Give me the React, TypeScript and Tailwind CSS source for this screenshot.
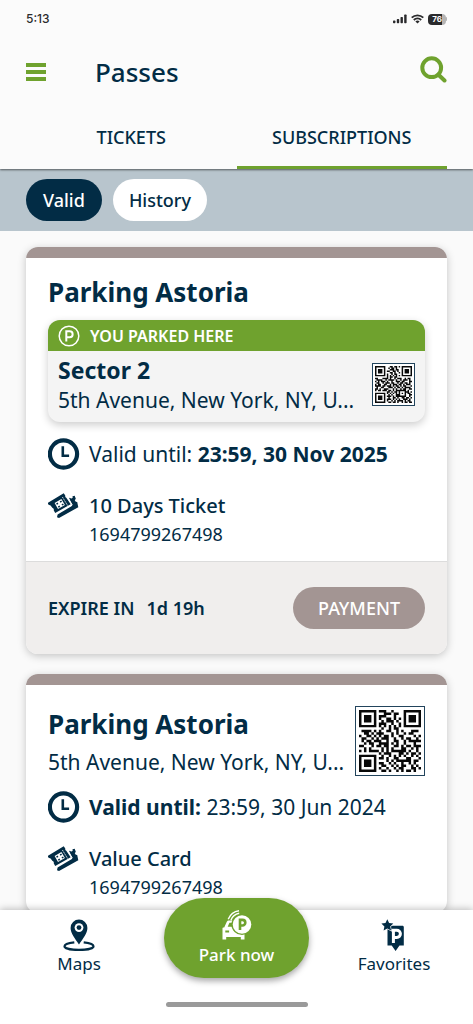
import React from "react";

const CARD_CODE = [
  "1111111011100100001111111",
  "1000001000111011001000001",
  "1011101011100010001011101",
  "1011101010011010101011101",
  "1011101001011101001011101",
  "1000001011100100101000001",
  "1111111010101010101111111",
  "0000000001001011000000000",
  "0111101010011001010001110",
  "0011010111000101001011000",
  "1001101010110100110000101",
  "0110010101110010010110010",
  "0101101110010011001011111",
  "0010110011110101001000100",
  "1100010110110011010110111",
  "0010100001010100011001010",
  "1010111101010111111010010",
  "0000000010111000110101101",
  "1111111001001010101001010",
  "1000001011010011000110001",
  "1011101000010101111110110",
  "1011101011001010010010100",
  "1011101001100101011001010",
  "1000001010010010110001101",
  "1111111001101001010110100",
];

const SECTOR_CODE = [
  "1111111000110110101111111",
  "1000001001011010001000001",
  "1011101000111011001011101",
  "1011101011001101001011101",
  "1011101000110100101011101",
  "1000001010010110001000001",
  "1111111010101010101111111",
  "0000000010110110000000000",
  "1100011110100101110010110",
  "0111100101111010010111010",
  "1010111010010011101100011",
  "0110010111011001011011010",
  "1011001100101110110101110",
  "1111011011101011010110001",
  "0100110001110101101011110",
  "1101001110001010010110011",
  "1011011101101011111110100",
  "0000000011010110100011101",
  "1111111010101010101010110",
  "1000001001010011100010011",
  "1011101011101011111110010",
  "1011101001001101001101101",
  "1011101011101010100111010",
  "1000001010010101111010110",
  "1111111001101101001011011",
];

function QrCode({ rows, label, className }: { rows: string[]; label: string; className: string }) {
  const path = rows
    .map((row, y) => row.split("").map((m, x) => (m === "1" ? `M${x} ${y}h1v1h-1z` : "")).join(""))
    .join("");
  return (
    <svg viewBox={`0 0 ${rows.length} ${rows.length}`} role="img" aria-label={label} className={className}>
      <path d={path} fill="#080808" />
    </svg>
  );
}

function ClockIcon() {
  return (
    <svg viewBox="0 0 32 32" aria-hidden="true" className="size-8 shrink-0" fill="none" stroke="currentColor">
      <circle cx="15.5" cy="16" r="13.6" strokeWidth="4.2" />
      <path d="M14.8 8.2v9.600h6.300" strokeWidth="2.600" />
    </svg>
  );
}

function TicketIcon() {
  return (
    <svg viewBox="0 0 32 28" aria-hidden="true" className="h-7 w-8 shrink-0" fill="currentColor">
      <path d="M-.4 13 15.7 3.200l1.600 2.400a1.900 1.900 0 0 0 1 2.200l4.400 6.500-15.500 8.600-1.500-2.600a2 2 0 0 0-1.400-2.500L2.600 15.500a2 2 0 0 0-1.800-.5z" />
      <path d="m6.600 13.100 6.800-4 3.500 6-6.900 3.900z" fill="#fff" />
      <path d="m14.500 7.200 5.300 8.600" stroke="#fff" strokeWidth="1" strokeDasharray="1.400 1" />
      <path d="m8.100 13.500 1.500-.9.800 1.300-1.500.9zM11.700 11.400l1.500-.9.800 1.300-1.500.9zM9.900 16.500l1.500-.9.800 1.300-1.500.9zM13.500 14.300l1.500-.9.800 1.300-1.500.9z" />
      <path d="M9.600 24.400 24.300 15.800 21 7.800l2.700.8 1-.8-.2-1.500 2.200-.6 1.100 3-1 1.500 1 1.600 1.400.2 1.100 5.200L11 28l-2-.7z" />
      <path d="m7.800 24 16.400-9.200-3.400-5.600" stroke="#fff" strokeWidth="1" fill="none" />
    </svg>
  );
}

function PassDetails({
  label,
  date,
  dateBold,
  product,
  number,
}: {
  label: string;
  date: string;
  dateBold: boolean;
  product: string;
  number: string;
}) {
  return (
    <>
      <p className="flex items-center gap-[9px] text-[21px] leading-8">
        <ClockIcon />
        <span>
          <span className={dateBold ? "font-normal" : "font-bold"}>{label}</span>{" "}
          <span className={dateBold ? "font-bold" : "font-normal"}>{date}</span>
        </span>
      </p>
      <div className="mt-5 flex items-start gap-[9px]">
        <TicketIcon />
        <div>
          <p className="text-[20px] leading-8 font-medium">{product}</p>
          <p className="text-[18px] leading-6">{number}</p>
        </div>
      </div>
    </>
  );
}

function StatusBar() {
  return (
    <div className="flex h-[38px] items-center justify-between pr-[26px] pl-[26px] text-[#2a2a2c]">
      <span className="font-[Inter,sans-serif] text-[12px] font-medium">5:13</span>
      <div className="flex items-center gap-1">
        <svg viewBox="0 0 14 10" aria-hidden="true" className="h-2.5 w-3.5" fill="currentColor">
          <rect x="0" y="6.5" width="2.400" height="2.800" rx=".7" />
          <rect x="3.8" y="5" width="2.400" height="4.300" rx=".7" />
          <rect x="7.5" y="3" width="2.400" height="6.300" rx=".7" />
          <rect x="11.2" y=".5" width="2.400" height="8.800" rx=".7" />
        </svg>
        <svg viewBox="0 0 13 10" aria-hidden="true" className="h-2.5 w-[13px]" fill="none" stroke="currentColor" strokeWidth="1.8">
          <path d="M.7 3.7a8.2 8.2 0 0 1 11.6 0M2.8 6a5.3 5.3 0 0 1 7.4 0" />
          <path d="M6.5 9.4 4.4 7.5a3.1 3.1 0 0 1 4.2 0z" fill="currentColor" stroke="none" />
        </svg>
        <span className="flex items-center">
          <span className="flex h-[11px] w-[18px] items-center justify-center rounded-[4px] bg-[linear-gradient(90deg,#2a2a2c_76%,#b5b5b5_76%)] font-[Inter,sans-serif] text-[8px] leading-none font-bold text-white">
            76
          </span>
          <span className="h-1 w-px rounded-r bg-[#b5b5b5]" />
        </span>
      </div>
    </div>
  );
}

export default function App() {
  return (
    <div className="flex h-screen flex-col overflow-hidden bg-[#fafafa] font-['Noto_Sans','Open_Sans',sans-serif] text-[#022c45]">
      <header className="relative z-10 bg-[#fbfbfb] shadow-[0_1px_2px_rgba(0,0,0,0.55)]">
        <StatusBar />
        <div className="flex h-[68px] items-center px-[26px]">
          <button type="button" aria-label="Menu" className="flex w-5 flex-col gap-[3px]">
            <span className="h-1 w-full bg-[#6fa22e]" />
            <span className="h-1 w-full bg-[#6fa22e]" />
            <span className="h-1 w-full bg-[#6fa22e]" />
          </button>
          <h1 className="ml-[49px] text-[26px] leading-9 font-medium">Passes</h1>
          <button type="button" aria-label="Search" className="mb-1.5 ml-auto">
            <svg viewBox="0 0 27 27" aria-hidden="true" className="size-[27px]" fill="none" stroke="#6fa22e" strokeWidth="4">
              <circle cx="11.7" cy="11.7" r="9.4" />
              <path d="m18.5 18.7 6 5.8" strokeLinecap="round" />
            </svg>
          </button>
        </div>
        <div role="tablist" className="grid grid-cols-2 px-[26px] text-[18px] font-medium">
          <button type="button" role="tab" aria-selected="false" className="h-[63px] border-b-[3px] border-transparent pt-0.5">
            TICKETS
          </button>
          <button type="button" role="tab" aria-selected="true" className="h-[63px] border-b-[3px] border-[#6fa22e] pt-0.5">
            SUBSCRIPTIONS
          </button>
        </div>
      </header>

      <div className="flex shrink-0 gap-[11px] bg-[#b8c5cd] px-[26px] py-2.5 text-[18px] font-medium">
        <button type="button" className="h-[42px] rounded-full bg-[#022c45] px-[17px] text-white">
          Valid
        </button>
        <button type="button" className="h-[42px] rounded-full bg-white px-4">
          History
        </button>
      </div>

      <main className="flex min-h-0 flex-1 flex-col gap-5 overflow-y-auto px-[26px] py-4 [scrollbar-width:none]">
        <article className="shrink-0 overflow-hidden rounded-xl bg-white shadow-[0_2px_8px_rgba(0,0,0,0.22)]">
          <div className="h-[11px] bg-[#a39593]" />
          <div className="px-[22px] pt-4 pb-[15px]">
            <h2 className="text-[26px] leading-9 font-bold">Parking Astoria</h2>
            <section className="mt-2.5 overflow-hidden rounded-xl bg-[#f4f4f4] shadow-[0_3px_8px_rgba(0,0,0,0.2)]">
              <div className="flex h-[31px] items-center gap-2.5 bg-[#6fa22e] px-2.5 text-white">
                <svg viewBox="0 0 22 22" aria-hidden="true" className="size-[22px]" fill="none" stroke="currentColor">
                  <circle cx="11" cy="11" r="9.8" strokeWidth="1.5" />
                  <path d="M8.3 16.4V6.3h3.4a2.9 2.9 0 0 1 0 5.9H8.3" strokeWidth="2" />
                </svg>
                <span className="text-[16px] leading-6 font-semibold">YOU PARKED HERE</span>
              </div>
              <div className="flex items-start justify-between px-2.5 pt-1 pb-[7px]">
                <div className="min-w-0">
                  <h3 className="text-[23px] leading-[30px] font-bold">Sector 2</h3>
                  <p className="text-[21px] leading-[30px]">5th Avenue, New York, NY, U...</p>
                </div>
                <div className="mt-2 shrink-0 border border-[#22445c] bg-white p-0.5">
                  <QrCode rows={SECTOR_CODE} label="Sector 2 pass code" className="size-[37px]" />
                </div>
              </div>
            </section>
            <div className="mt-4">
              <PassDetails label="Valid until:" date="23:59, 30 Nov 2025" dateBold product="10 Days Ticket" number="1694799267498" />
            </div>
          </div>
          <footer className="flex h-[93px] items-center justify-between border-t border-[#dcdcdc] bg-[#f0eeed] px-[22px]">
            <p className="flex gap-3 text-[18px] font-semibold">
              <span>EXPIRE IN</span>
              <span>1d 19h</span>
            </p>
            <button type="button" className="h-[42px] rounded-full bg-[#a39593] px-[25px] text-[18px] font-medium text-white">
              PAYMENT
            </button>
          </footer>
        </article>

        <article className="shrink-0 overflow-hidden rounded-xl bg-white shadow-[0_2px_8px_rgba(0,0,0,0.22)]">
          <div className="h-[11px] bg-[#a39593]" />
          <div className="px-[22px] pt-[21px] pb-3.5">
            <div className="flex items-start justify-between">
              <div className="min-w-0">
                <h2 className="text-[26px] leading-9 font-bold">Parking Astoria</h2>
                <p className="text-[21px] leading-10">5th Avenue, New York, NY, U...</p>
              </div>
              <div className="shrink-0 border border-[#22445c] bg-white p-[3px]">
                <QrCode rows={CARD_CODE} label="Value Card pass code" className="size-[62px]" />
              </div>
            </div>
            <div className="mt-[9px]">
              <PassDetails label="Valid until:" date="23:59, 30 Jun 2024" dateBold={false} product="Value Card" number="1694799267498" />
            </div>
          </div>
        </article>
      </main>

      <nav className="relative z-10 flex h-[114px] shrink-0 items-start justify-between bg-white shadow-[0_-1px_7px_rgba(0,0,0,0.25)]">
        <a href="#maps" className="flex w-[158px] flex-col items-center pt-2 text-[17px] leading-6">
          <svg viewBox="0 0 32 32" aria-hidden="true" className="mt-px size-8" fill="currentColor">
            <path d="M16 25.5C12 19.300 7.600 14.500 7.600 8.900a8.400 8.400 0 0 1 16.800 0c0 5.600-4.400 10.400-8.400 16.600z" />
            <circle cx="16" cy="8.600" r="4.400" fill="#fff" />
            <circle cx="16" cy="8.600" r="2.400" />
            <path
              d="M11.300 23.300C5.700 23.900 1.500 25.200 1.500 27.200c0 2.200 6.500 3.700 14.500 3.700s14.500-1.500 14.500-3.700c0-2-4.200-3.300-9.800-3.900"
              fill="none"
              stroke="currentColor"
              strokeWidth="2.200"
            />
          </svg>
          <span className="mt-px">Maps</span>
        </a>
        <button
          type="button"
          className="-mt-3 flex h-20 w-[145px] flex-col items-center rounded-full bg-[#6fa22e] pt-3 text-[17px] leading-6 font-medium text-white shadow-[0_3px_6px_rgba(0,0,0,0.35)]"
        >
          <svg viewBox="0 0 30 30" aria-hidden="true" className="size-[30px]" fill="#fff">
            <path d="M.5 29.500V18.500c0-.6.400-1 1-1h.7l2.600-5.800c.4-.8 1-1.200 1.900-1.200H14c1 3.500 4 7.500 8.500 8.300v10.700h-3.700V27H4.200v2.500z" />
            <path d="M5.700 16.700 7.400 12.800h3.200l.6 3.900z" fill="#6fa22e" />
            <path d="M3.300 20.500h3.800v2H3.300zM15.600 22h3.900v2h-3.900z" fill="#6fa22e" />
            <circle cx="20" cy="14.500" r="10.600" fill="#6fa22e" />
            <circle cx="20" cy="14.500" r="9.300" />
            <path d="M18 20V9.900h2.500a2.800 2.800 0 0 1 0 5.600H18" fill="none" stroke="#6fa22e" strokeWidth="2.600" />
            <path d="M6.200 9.300C8 5 11.500 1.500 17 .8M8.900 10.200C10.200 6.700 13 4 17.200 3.200" fill="none" stroke="#fff" strokeWidth="1.400" />
          </svg>
          <span className="mt-[3px]">Park now</span>
        </button>
        <a href="#favorites" className="flex w-[158px] flex-col items-center pt-2 text-[17px] leading-6">
          <svg viewBox="0 0 32 32" aria-hidden="true" className="mt-px size-8" fill="currentColor">
            <path d="M9.500 8.200c0-.8.600-1.500 1.500-1.500h13.400c.8 0 1.400.6 1.400 1.400v18.400h-4.300L17.600 32l-3.900-5.500H9.500z" />
            <path d="M15.400 24V11.200h3.400a3.600 3.600 0 0 1 0 7.200h-3.400" fill="none" stroke="#fff" strokeWidth="3" />
            <path
              d="m9.300.3 1.800 3.800 4.200.5-3.100 2.800.9 4.100-3.800-2-3.700 2.100.8-4.200-3-2.800 4.100-.5z"
              stroke="#fff"
              strokeWidth="1.400"
              paintOrder="stroke"
            />
          </svg>
          <span className="mt-px">Favorites</span>
        </a>
        <div className="absolute inset-x-0 bottom-[17px] mx-auto h-[5px] w-[142px] rounded-full bg-[#9a9a9a]" />
      </nav>
    </div>
  );
}
